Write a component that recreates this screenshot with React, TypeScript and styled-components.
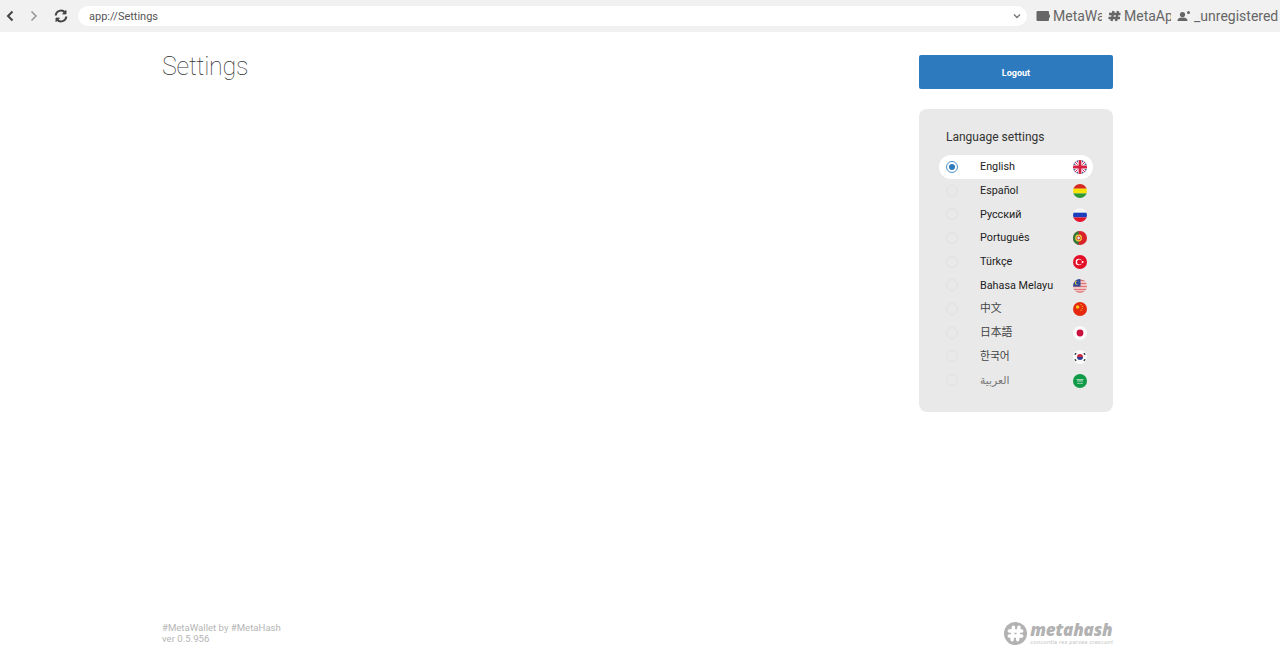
import React from "react";
import styled, { createGlobalStyle } from "styled-components";

const Global = createGlobalStyle`
  html, body { margin: 0; padding: 0; background: #fff; height: 100%; }
  #root { height: 100%; }
  * { box-sizing: border-box; }
  body { font-family: Roboto, "Noto Sans CJK SC", "Noto Sans CJK KR", "DejaVu Sans", sans-serif; overflow: hidden; }
`;

const Page = styled.div`
  width: 1280px;
  height: 659px;
  display: flex;
  flex-direction: column;
`;

const Toolbar = styled.header`
  height: 32px;
  flex: none;
  background: #f1f1f1;
  display: flex;
  align-items: center;
`;

const NavButton = styled.button<{ $w: number }>`
  width: ${(p) => p.$w}px;
  height: 31px;
  flex: none;
  border: 0;
  padding: 0;
  background: none;
  display: flex;
  align-items: center;
  justify-content: center;
`;

const Address = styled.div`
  width: 949px;
  height: 20px;
  margin-left: 4px;
  flex: none;
  background: #fff;
  border-radius: 10px;
  display: flex;
  align-items: center;
  justify-content: space-between;
  padding: 0 4px 0 11px;
  font-size: 11px;
  color: #555;
`;

const Tab = styled.div<{ $w: number }>`
  width: ${(p) => p.$w}px;
  flex: none;
  display: flex;
  align-items: center;
  gap: 3px;
  overflow: hidden;
  white-space: nowrap;
  font-size: 14px;
  color: #666;
  svg { flex: none; }
`;

const TabRow = styled.nav`
  display: flex;
  align-items: center;
  margin-left: 9px;
  gap: 6px;
`;

const Content = styled.main`
  flex: 1;
  width: 951px;
  margin-left: 162px;
  display: flex;
  flex-direction: column;
  justify-content: space-between;
`;

const Columns = styled.div`
  display: flex;
  justify-content: space-between;
  align-items: flex-start;
  padding-top: 23px;
`;

const Title = styled.h1`
  margin: 0;
  font-size: 25px;
  line-height: 21px;
  padding-top: 1px;
  font-weight: 100;
  letter-spacing: -0.25px;
  color: #333;
`;

const Side = styled.aside`
  width: 194px;
  display: flex;
  flex-direction: column;
  gap: 20px;
`;

const Logout = styled.button`
  height: 34px;
  border: 0;
  border-radius: 2px;
  background: #2e7abf;
  color: #fff;
  padding-top: 2px;
  font: 700 9px Roboto, sans-serif;
`;

const Panel = styled.section`
  height: 303px;
  background: #e9e9e9;
  border-radius: 8px;
  padding: 21px 20px 0;
`;

const PanelTitle = styled.h2`
  margin: 0 0 10px 7px;
  font-size: 12px;
  line-height: 15px;
  font-weight: 400;
  color: #333;
`;

const Row = styled.div<{ $active?: boolean }>`
  height: 23.7px;
  display: flex;
  align-items: center;
  padding: 0 6px 0 7px;
  border-radius: 12px;
  background: ${(p) => (p.$active ? "#fff" : "transparent")};
`;

const Radio = styled.span<{ $active?: boolean }>`
  width: 12px;
  height: 12px;
  flex: none;
  border-radius: 50%;
  border: 1px solid ${(p) => (p.$active ? "#4b8fcb" : "#e1e1e1")};
  display: flex;
  align-items: center;
  justify-content: center;
  &::after {
    content: "";
    width: 6px;
    height: 6px;
    border-radius: 50%;
    background: ${(p) => (p.$active ? "#2e7abf" : "transparent")};
  }
`;

const Label = styled.span<{ $tone?: string }>`
  flex: 1;
  margin-left: 22px;
  padding-top: 1px;
  font-size: 10.8px;
  line-height: 14px;
  font-weight: 400;
  color: ${(p) => p.$tone ?? "#222"};
  white-space: nowrap;
`;

const Flag = styled.svg`
  width: 14px;
  height: 14px;
  flex: none;
  margin-top: 1px;
`;

const Footer = styled.footer`
  display: flex;
  justify-content: space-between;
  align-items: flex-end;
  padding-bottom: 15px;
`;

const Credits = styled.div`
  font-size: 9.6px;
  line-height: 11px;
  color: #b5b5b5;
  font-weight: 400;
`;

const Brand = styled.div`
  display: flex;
  align-items: center;
  gap: 3px;
  color: #b2b2b2;
  margin-bottom: -1px;
`;

const BrandText = styled.div`
  display: flex;
  flex-direction: column;
  align-items: flex-start;
`;

const BrandName = styled.span`
  font: italic 800 17px/15px "Open Sans", sans-serif;
  letter-spacing: -0.2px;
`;

const BrandTag = styled.span`
  margin-top: 2px;
  font: italic 400 5.8px/6px Roboto, sans-serif;
  color: #c5c5c5;
  letter-spacing: 0.25px;
  white-space: nowrap;
`;

const Clip = ({ id, children }: { id: string; children: React.ReactNode }) => (
  <Flag viewBox="0 0 14 14">
    <defs>
      <clipPath id={id}>
        <circle cx="7" cy="7" r="7" />
      </clipPath>
    </defs>
    <g clipPath={`url(#${id})`}>{children}</g>
  </Flag>
);

const flags: Record<string, React.ReactNode> = {
  en: (
    <Clip id="f-en">
      <rect width="14" height="14" fill="#2a3f86" />
      <path d="M0 0L14 14M14 0L0 14" stroke="#fff" strokeWidth="3" />
      <path d="M0 0L14 14M14 0L0 14" stroke="#d3213f" strokeWidth="1" />
      <path d="M7 0V14M0 7H14" stroke="#fff" strokeWidth="4.4" />
      <path d="M7 0V14M0 7H14" stroke="#d3213f" strokeWidth="2.8" />
    </Clip>
  ),
  es: (
    <Clip id="f-es">
      <rect width="14" height="4.7" fill="#d52b1e" />
      <rect y="4.7" width="14" height="4.7" fill="#f9e300" />
      <rect y="9.4" width="14" height="4.6" fill="#2f9a33" />
    </Clip>
  ),
  ru: (
    <Clip id="f-ru">
      <rect width="14" height="4.7" fill="#f4f4f4" />
      <rect y="4.7" width="14" height="4.7" fill="#1c3fc0" />
      <rect y="9.4" width="14" height="4.6" fill="#e3142a" />
    </Clip>
  ),
  pt: (
    <Clip id="f-pt">
      <rect width="14" height="14" fill="#d8232a" />
      <rect width="5.6" height="14" fill="#2f7d3a" />
      <circle cx="5.6" cy="7" r="3.4" fill="#f0cf3c" />
      <circle cx="5.6" cy="7" r="1.8" fill="#e8e8e8" stroke="#c8242c" strokeWidth=".8" />
    </Clip>
  ),
  tr: (
    <Clip id="f-tr">
      <rect width="14" height="14" fill="#e30f26" />
      <circle cx="5.8" cy="7" r="3.2" fill="#fff" />
      <circle cx="6.6" cy="7" r="2.5" fill="#e30f26" />
      <circle cx="9.6" cy="7" r="1" fill="#fff" />
    </Clip>
  ),
  ms: (
    <Clip id="f-ms">
      <rect width="14" height="14" fill="#f3dede" />
      <path d="M0 1.5H14M0 4.5H14M0 7.5H14M0 10.5H14M0 13H14" stroke="#e0777a" strokeWidth="1.3" />
      <rect width="7.5" height="7.5" fill="#2b4a9b" />
      <circle cx="3.8" cy="3.8" r="2" fill="#f3d13c" />
      <circle cx="4.6" cy="3.8" r="1.7" fill="#2b4a9b" />
    </Clip>
  ),
  zh: (
    <Clip id="f-zh">
      <rect width="14" height="14" fill="#e5290f" />
      <circle cx="4.6" cy="5" r="1.8" fill="#f5c518" />
      <circle cx="8" cy="2.6" r=".6" fill="#f5c518" />
      <circle cx="9.3" cy="4.4" r=".6" fill="#f5c518" />
      <circle cx="9.3" cy="6.6" r=".6" fill="#f5c518" />
      <circle cx="8" cy="8.2" r=".6" fill="#f5c518" />
    </Clip>
  ),
  ja: (
    <Clip id="f-ja">
      <rect width="14" height="14" fill="#fafafa" />
      <circle cx="7" cy="7" r="3.4" fill="#c9103f" />
    </Clip>
  ),
  ko: (
    <Clip id="f-ko">
      <rect width="14" height="14" fill="#fafafa" />
      <path d="M4 7a3 3 0 0 1 6 0z" fill="#cf2a45" />
      <path d="M4 7a3 3 0 0 0 6 0z" fill="#2a3f8f" />
      <path d="M1.8 4.6L3.2 3.2M10.8 3.2L12.2 4.6M1.8 9.4L3.2 10.8M10.8 10.8L12.2 9.4" stroke="#222" strokeWidth="1.3" />
    </Clip>
  ),
  ar: (
    <Clip id="f-ar">
      <rect width="14" height="14" fill="#0e9a47" />
      <path d="M3.5 5.6H10.5M4 7H10" stroke="#d6efdd" strokeWidth=".8" />
      <path d="M4 9.4H10" stroke="#e8f5ec" strokeWidth=".6" />
    </Clip>
  ),
};

const languages: { code: string; name: string; tone?: string }[] = [
  { code: "en", name: "English" },
  { code: "es", name: "Español" },
  { code: "ru", name: "Русский" },
  { code: "pt", name: "Português" },
  { code: "tr", name: "Türkçe" },
  { code: "ms", name: "Bahasa Melayu" },
  { code: "zh", name: "中文", tone: "#444" },
  { code: "ja", name: "日本語", tone: "#444" },
  { code: "ko", name: "한국어", tone: "#444" },
  { code: "ar", name: "العربية", tone: "#777" },
];

export default function App() {
  return (
    <Page>
      <Global />
      <Toolbar>
        <NavButton $w={20}>
          <svg width="10" height="12" viewBox="0 0 10 12" fill="none" stroke="#444" strokeWidth="2">
            <path d="M7.5 1.5L3 6l4.5 4.5" />
          </svg>
        </NavButton>
        <NavButton $w={28}>
          <svg width="10" height="12" viewBox="0 0 10 12" fill="none" stroke="#999" strokeWidth="1.6">
            <path d="M2.5 1.5L7 6l-4.5 4.5" />
          </svg>
        </NavButton>
        <NavButton $w={26}>
          <svg width="14" height="14" viewBox="0 0 14 14" fill="none" stroke="#444" strokeWidth="2">
            <path d="M1.7 6.5a5.3 5.3 0 0 1 9.3-3" />
            <path d="M12.3 7.5a5.3 5.3 0 0 1-9.3 3" />
            <path d="M12 1.5v3.4H8.6z" fill="#444" strokeWidth="1" />
            <path d="M2 12.5V9.1h3.4z" fill="#444" strokeWidth="1" />
          </svg>
        </NavButton>
        <Address>
          <span>app://Settings</span>
          <svg width="12" height="12" viewBox="0 0 12 12" fill="none" stroke="#777" strokeWidth="1.4">
            <path d="M3 4.5L6 7.5 9 4.5" />
          </svg>
        </Address>
        <TabRow>
          <Tab $w={66}>
            <svg width="14" height="12" viewBox="0 0 14 12" fill="#666">
              <path d="M1.5 1H12a1 1 0 0 1 1 1v8a1 1 0 0 1-1 1H1.5A1 1 0 0 1 .5 10V2a1 1 0 0 1 1-1z" />
              <rect x="9" y="4" width="5" height="4" rx="1.5" />
            </svg>
            <span>MetaWallet</span>
          </Tab>
          <Tab $w={63}>
            <svg width="13" height="12" viewBox="0 0 13 12" fill="none" stroke="#666" strokeWidth="2.4">
              <path d="M5.5 1L3.5 11M10 1L8 11M1 4h11.5M.5 8h11.5" />
            </svg>
            <span>MetaApps</span>
          </Tab>
          <Tab $w={102}>
            <svg width="14" height="12" viewBox="0 0 14 12" fill="#666">
              <circle cx="5.5" cy="4.5" r="2.6" />
              <path d="M.5 11c0-3 2.2-3.6 5-3.6s5 .6 5 3.6z" />
              <circle cx="11.5" cy="2.5" r="1.5" />
            </svg>
            <span>_unregistered</span>
          </Tab>
        </TabRow>
      </Toolbar>
      <Content>
        <Columns>
          <Title>Settings</Title>
          <Side>
            <Logout>Logout</Logout>
            <Panel>
              <PanelTitle>Language settings</PanelTitle>
              {languages.map((l, i) => (
                <Row key={l.code} $active={i === 0}>
                  <Radio $active={i === 0} />
                  <Label $tone={l.tone}>{l.name}</Label>
                  {flags[l.code]}
                </Row>
              ))}
            </Panel>
          </Side>
        </Columns>
        <Footer>
          <Credits>
            #MetaWallet by #MetaHash
            <br />
            ver 0.5.956
          </Credits>
          <Brand>
            <svg width="23" height="23" viewBox="0 0 24 24">
              <circle cx="12" cy="12" r="12" fill="#b2b2b2" />
              <path d="M9.8 5.5L8.4 18.5M15.6 5.5L14.2 18.5M5.5 9.4H18.5M5.5 14.6H18.5" stroke="#fff" strokeWidth="3.6" strokeLinecap="round" />
            </svg>
            <BrandText>
              <BrandName>metahash</BrandName>
              <BrandTag>concordia res parvae crescunt</BrandTag>
            </BrandText>
          </Brand>
        </Footer>
      </Content>
    </Page>
  );
}
